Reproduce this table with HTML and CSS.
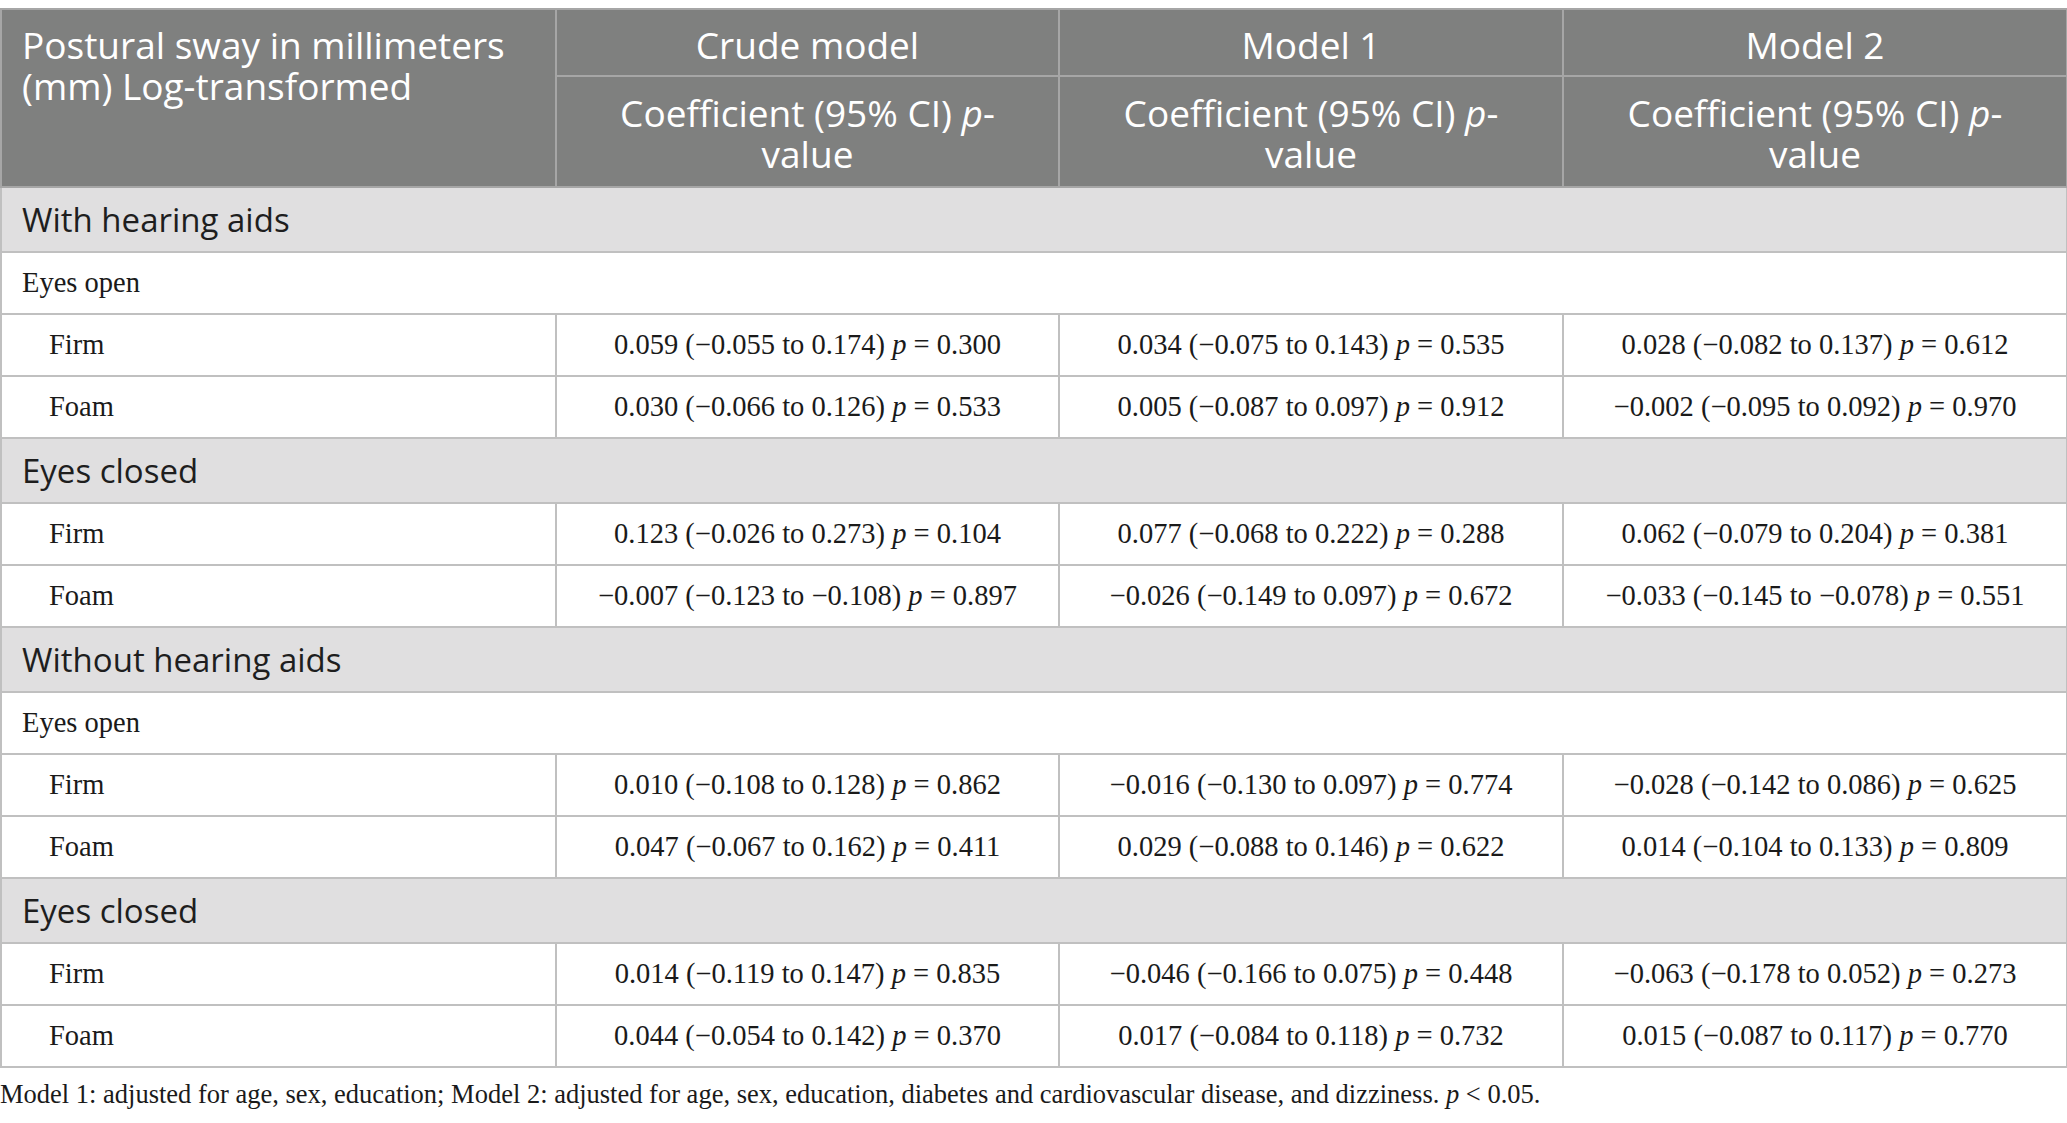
FILE: index.html
```html
<!DOCTYPE html>
<html>
<head>
<meta charset="utf-8">
<link rel="stylesheet" href="styles.css">
</head>
<body>
<table class="tbl">
  <colgroup>
    <col class="c0"><col class="c1"><col class="c2"><col class="c3">
  </colgroup>
  <thead>
    <tr class="h1">
      <th rowspan="2" class="hl">Postural sway in millimeters (mm) Log-transformed</th>
      <th>Crude model</th>
      <th>Model 1</th>
      <th>Model 2</th>
    </tr>
    <tr class="h2">
      <th>Coefficient (95% CI) <i>p</i>-value</th>
      <th>Coefficient (95% CI) <i>p</i>-value</th>
      <th>Coefficient (95% CI) <i>p</i>-value</th>
    </tr>
  </thead>
  <tbody>
    <tr class="sec"><td colspan="4">With hearing aids</td></tr>
    <tr class="sub"><td colspan="4">Eyes open</td></tr>
    <tr class="dat"><td>Firm</td><td>0.059 (−0.055 to 0.174) <i>p</i> = 0.300</td><td>0.034 (−0.075 to 0.143) <i>p</i> = 0.535</td><td>0.028 (−0.082 to 0.137) <i>p</i> = 0.612</td></tr>
    <tr class="dat"><td>Foam</td><td>0.030 (−0.066 to 0.126) <i>p</i> = 0.533</td><td>0.005 (−0.087 to 0.097) <i>p</i> = 0.912</td><td>−0.002 (−0.095 to 0.092) <i>p</i> = 0.970</td></tr>
    <tr class="sec"><td colspan="4">Eyes closed</td></tr>
    <tr class="dat"><td>Firm</td><td>0.123 (−0.026 to 0.273) <i>p</i> = 0.104</td><td>0.077 (−0.068 to 0.222) <i>p</i> = 0.288</td><td>0.062 (−0.079 to 0.204) <i>p</i> = 0.381</td></tr>
    <tr class="dat"><td>Foam</td><td>−0.007 (−0.123 to −0.108) <i>p</i> = 0.897</td><td>−0.026 (−0.149 to 0.097) <i>p</i> = 0.672</td><td>−0.033 (−0.145 to −0.078) <i>p</i> = 0.551</td></tr>
    <tr class="sec"><td colspan="4">Without hearing aids</td></tr>
    <tr class="sub"><td colspan="4">Eyes open</td></tr>
    <tr class="dat"><td>Firm</td><td>0.010 (−0.108 to 0.128) <i>p</i> = 0.862</td><td>−0.016 (−0.130 to 0.097) <i>p</i> = 0.774</td><td>−0.028 (−0.142 to 0.086) <i>p</i> = 0.625</td></tr>
    <tr class="dat"><td>Foam</td><td>0.047 (−0.067 to 0.162) <i>p</i> = 0.411</td><td>0.029 (−0.088 to 0.146) <i>p</i> = 0.622</td><td>0.014 (−0.104 to 0.133) <i>p</i> = 0.809</td></tr>
    <tr class="sec"><td colspan="4">Eyes closed</td></tr>
    <tr class="dat"><td>Firm</td><td>0.014 (−0.119 to 0.147) <i>p</i> = 0.835</td><td>−0.046 (−0.166 to 0.075) <i>p</i> = 0.448</td><td>−0.063 (−0.178 to 0.052) <i>p</i> = 0.273</td></tr>
    <tr class="dat"><td>Foam</td><td>0.044 (−0.054 to 0.142) <i>p</i> = 0.370</td><td>0.017 (−0.084 to 0.118) <i>p</i> = 0.732</td><td>0.015 (−0.087 to 0.117) <i>p</i> = 0.770</td></tr>
  </tbody>
</table>
<p class="note">Model 1: adjusted for age, sex, education; Model 2: adjusted for age, sex, education, diabetes and cardiovascular disease, and dizziness. <i>p</i> &lt; 0.05.</p>
</body>
</html>
```
FILE: styles.css
```css
html, body {
  margin: 0;
  padding: 0;
  background: #ffffff;
}
body {
  padding-top: 8px;
}
.tbl {
  width: 2066px;
  border-collapse: collapse;
  table-layout: fixed;
  font-family: "Liberation Serif", serif;
  color: #1a1a1a;
}
.c0 { width: 555px; }
.c1 { width: 503px; }
.c2 { width: 504px; }
.c3 { width: 504px; }
.tbl th, .tbl td {
  border: 2px solid #c0c0c0;
}
.tbl thead th {
  background: #7f807f;
  color: #ffffff;
  font-family: "Open Sans", "Noto Sans", sans-serif;
  font-weight: 400;
  font-size: 37px;
  line-height: 41px;
  text-align: center;
  vertical-align: top;
  border-color: #a6a6a6;
  padding: 0 36px;
  box-sizing: border-box;
}
.tbl thead th.hl {
  text-align: left;
  padding: 14px 20px 0 20px;
}
.tbl .h1 th { height: 67px; padding-top: 14px; }
.tbl .h2 th { height: 111px; padding-top: 15px; }
.sec td {
  background: #e0dfe0;
  font-family: "Open Sans", "Noto Sans", sans-serif;
  font-size: 33px;
  color: #1e1e1e;
  height: 63px;
  padding: 0 20px;
}
.sub td {
  font-size: 28.5px;
  height: 60px;
  padding: 0 20px;
}
.dat td {
  font-size: 28.5px;
  height: 60px;
  text-align: center;
  padding: 0;
}
.dat td:first-child {
  text-align: left;
  padding-left: 47px;
}
.note {
  margin: 11px 0 0 0;
  font-family: "Liberation Serif", serif;
  font-size: 26.5px;
  color: #1a1a1a;
}
```
